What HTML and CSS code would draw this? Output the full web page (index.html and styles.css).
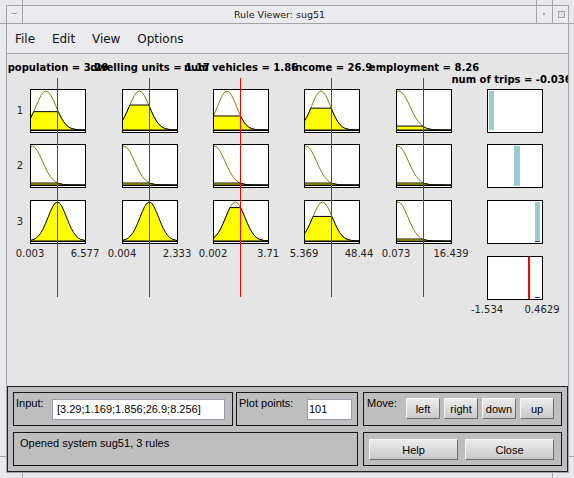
FILE: index.html
```html
<!DOCTYPE html>
<html>
<head>
<meta charset="utf-8">
<title>Rule Viewer: sug51</title>
<link rel="stylesheet" href="styles.css">
</head>
<body>
<svg class="defs" width="0" height="0">
  <defs>
    <path id="bell" vector-effect="non-scaling-stroke" d="M-4.5 0L-4 .0003L-3.5 .0022L-3 .0111L-2.5 .0439L-2.25 .0796L-2 .1353L-1.75 .2165L-1.5 .3247L-1.25 .4578L-1 .6065L-.75 .7548L-.5 .8825L-.25 .9692L0 1L.25 .9692L.5 .8825L.75 .7548L1 .6065L1.25 .4578L1.5 .3247L1.75 .2165L2 .1353L2.25 .0796L2.5 .0439L3 .0111L3.5 .0022L4 .0003L4.5 0"/>
    <path id="bellf" vector-effect="non-scaling-stroke" d="M-6 0L-4 .0003L-3.5 .0022L-3 .0111L-2.5 .0439L-2.25 .0796L-2 .1353L-1.75 .2165L-1.5 .3247L-1.25 .4578L-1 .6065L-.75 .7548L-.5 .8825L-.25 .9692L0 1L.25 .9692L.5 .8825L.75 .7548L1 .6065L1.25 .4578L1.5 .3247L1.75 .2165L2 .1353L2.25 .0796L2.5 .0439L3 .0111L3.5 .0022L4 .0003L6 0Z"/>
    <clipPath id="L47"><rect x="-10" y="-1" width="20" height="1.47"/></clipPath>
    <clipPath id="L64"><rect x="-10" y="-1" width="20" height="1.64"/></clipPath>
    <clipPath id="L36"><rect x="-10" y="-1" width="20" height="1.36"/></clipPath>
    <clipPath id="L56"><rect x="-10" y="-1" width="20" height="1.56"/></clipPath>
    <clipPath id="L10"><rect x="-10" y="-1" width="20" height="1.1"/></clipPath>
    <clipPath id="L05"><rect x="-10" y="-1" width="20" height="1.05"/></clipPath>
    <clipPath id="L86"><rect x="-10" y="-1" width="20" height="1.856"/></clipPath>
    <clipPath id="L63"><rect x="-10" y="-1" width="20" height="1.63"/></clipPath>
  </defs>
</svg>

<div class="frame">
  <div class="titlebar">
    <div class="tb-btn tb-min"><span class="dash"></span></div>
    <div class="tb-title">Rule Viewer: sug51</div>
    <div class="tb-btn tb-dot"><span class="dot"></span></div>
    <div class="tb-btn tb-max"><span class="sq"></span></div>
  </div>

  <div class="menubar">
    <span>File</span><span>Edit</span><span>View</span><span>Options</span>
  </div>

  <div class="plots">
    <div class="rowlabels"><span>1</span><span>2</span><span>3</span></div>

    <!-- population -->
    <div class="col">
      <div class="vname"><span>population = 3.29</span></div>
      <div class="mf"><svg width="54" height="42"><g transform="translate(15 40) scale(10 -39)"><use href="#bell" class="crv"/><use href="#bellf" class="fil" clip-path="url(#L47)"/><line class="lvl" vector-effect="non-scaling-stroke" x1="-1.229" x2="1.229" y1="0.47" y2="0.47"/></g><line class="base" x1="0" x2="54" y1="40.5" y2="40.5"/></svg></div>
      <div class="mf r2"><svg width="54" height="42"><g transform="translate(1 40) scale(10.5 -39)"><use href="#bell" class="crv"/><use href="#bellf" class="fil" clip-path="url(#L05)"/><line class="lvl" vector-effect="non-scaling-stroke" x1="-2.448" x2="2.448" y1="0.05" y2="0.05"/></g><line class="base" x1="0" x2="54" y1="40.5" y2="40.5"/></svg></div>
      <div class="mf r3"><svg width="54" height="42"><g transform="translate(26.3 40) scale(9.3 -39)"><use href="#bellf" class="fil"/></g><line class="base" x1="0" x2="54" y1="40.5" y2="40.5"/></svg></div>
      <div class="range"><span>0.003</span><span>6.577</span></div>
      <div class="cursor"></div>
    </div>

    <!-- dwelling units -->
    <div class="col">
      <div class="vname"><span>dwelling units = 1.17</span></div>
      <div class="mf"><svg width="54" height="42"><g transform="translate(16.3 40) scale(10 -39)"><use href="#bell" class="crv"/><use href="#bellf" class="fil" clip-path="url(#L64)"/><line class="lvl" vector-effect="non-scaling-stroke" x1="-0.945" x2="0.945" y1="0.64" y2="0.64"/></g><line class="base" x1="0" x2="54" y1="40.5" y2="40.5"/></svg></div>
      <div class="mf r2"><svg width="54" height="42"><g transform="translate(1 40) scale(10.5 -39)"><use href="#bell" class="crv"/><use href="#bellf" class="fil" clip-path="url(#L05)"/><line class="lvl" vector-effect="non-scaling-stroke" x1="-2.448" x2="2.448" y1="0.05" y2="0.05"/></g><line class="base" x1="0" x2="54" y1="40.5" y2="40.5"/></svg></div>
      <div class="mf r3"><svg width="54" height="42"><g transform="translate(26.3 40) scale(9.3 -39)"><use href="#bellf" class="fil"/></g><line class="base" x1="0" x2="54" y1="40.5" y2="40.5"/></svg></div>
      <div class="range"><span>0.004</span><span>2.333</span></div>
      <div class="cursor"></div>
    </div>

    <!-- num vehicles -->
    <div class="col">
      <div class="vname"><span>num vehicles = 1.86</span></div>
      <div class="mf"><svg width="54" height="42"><g transform="translate(13 40) scale(9.5 -39)"><use href="#bell" class="crv"/><use href="#bellf" class="fil" clip-path="url(#L36)"/><line class="lvl" vector-effect="non-scaling-stroke" x1="-1.43" x2="1.43" y1="0.36" y2="0.36"/></g><line class="base" x1="0" x2="54" y1="40.5" y2="40.5"/></svg></div>
      <div class="mf r2"><svg width="54" height="42"><g transform="translate(0.5 40) scale(10.5 -39)"><use href="#bell" class="crv"/><use href="#bellf" class="fil" clip-path="url(#L05)"/><line class="lvl" vector-effect="non-scaling-stroke" x1="-2.448" x2="2.448" y1="0.05" y2="0.05"/></g><line class="base" x1="0" x2="54" y1="40.5" y2="40.5"/></svg></div>
      <div class="mf r3"><svg width="54" height="42"><g transform="translate(21.3 40) scale(9.6 -39)"><use href="#bell" class="crv"/><use href="#bellf" class="fil" clip-path="url(#L86)"/><line class="lvl" vector-effect="non-scaling-stroke" x1="-0.558" x2="0.558" y1="0.856" y2="0.856"/></g><line class="base" x1="0" x2="54" y1="40.5" y2="40.5"/></svg></div>
      <div class="range"><span>0.002</span><span>3.71</span></div>
      <div class="cursor"></div>
    </div>

    <!-- income -->
    <div class="col">
      <div class="vname"><span>income = 26.9</span></div>
      <div class="mf"><svg width="54" height="42"><g transform="translate(16 40) scale(9.5 -39)"><use href="#bell" class="crv"/><use href="#bellf" class="fil" clip-path="url(#L56)"/><line class="lvl" vector-effect="non-scaling-stroke" x1="-1.077" x2="1.077" y1="0.56" y2="0.56"/></g><line class="base" x1="0" x2="54" y1="40.5" y2="40.5"/></svg></div>
      <div class="mf r2"><svg width="54" height="42"><g transform="translate(1 40) scale(10.5 -39)"><use href="#bell" class="crv"/><use href="#bellf" class="fil" clip-path="url(#L05)"/><line class="lvl" vector-effect="non-scaling-stroke" x1="-2.448" x2="2.448" y1="0.05" y2="0.05"/></g><line class="base" x1="0" x2="54" y1="40.5" y2="40.5"/></svg></div>
      <div class="mf r3"><svg width="54" height="42"><g transform="translate(17.5 40) scale(9.8 -39)"><use href="#bell" class="crv"/><use href="#bellf" class="fil" clip-path="url(#L63)"/><line class="lvl" vector-effect="non-scaling-stroke" x1="-0.961" x2="0.961" y1="0.63" y2="0.63"/></g><line class="base" x1="0" x2="54" y1="40.5" y2="40.5"/></svg></div>
      <div class="range"><span>5.369</span><span>48.44</span></div>
      <div class="cursor"></div>
    </div>

    <!-- employment -->
    <div class="col">
      <div class="vname"><span>employment = 8.26</span></div>
      <div class="mf"><svg width="54" height="42"><g transform="translate(2 40) scale(11 -39)"><use href="#bell" class="crv"/><use href="#bellf" class="fil" clip-path="url(#L10)"/><line class="lvl" vector-effect="non-scaling-stroke" x1="-2.146" x2="2.146" y1="0.1" y2="0.1"/></g><line class="base" x1="0" x2="54" y1="40.5" y2="40.5"/></svg></div>
      <div class="mf r2"><svg width="54" height="42"><g transform="translate(1 40) scale(10.5 -39)"><use href="#bell" class="crv"/><use href="#bellf" class="fil" clip-path="url(#L05)"/><line class="lvl" vector-effect="non-scaling-stroke" x1="-2.448" x2="2.448" y1="0.05" y2="0.05"/></g><line class="base" x1="0" x2="54" y1="40.5" y2="40.5"/></svg></div>
      <div class="mf r3"><svg width="54" height="42"><g transform="translate(1 40) scale(10 -39)"><use href="#bell" class="crv"/><use href="#bellf" class="fil" clip-path="url(#L05)"/><line class="lvl" vector-effect="non-scaling-stroke" x1="-2.448" x2="2.448" y1="0.05" y2="0.05"/></g><line class="base" x1="0" x2="54" y1="40.5" y2="40.5"/></svg></div>
      <div class="range"><span>0.073</span><span>16.439</span></div>
      <div class="cursor"></div>
    </div>

    <!-- output -->
    <div class="col">
      <div class="vname out"><span>num of trips = -0.0363</span></div>
      <div class="mf"><svg width="54" height="42"><rect class="bar" x="1" y="1" width="5" height="39"/></svg></div>
      <div class="mf r2"><svg width="54" height="42"><rect class="bar" x="26" y="1" width="6" height="40"/></svg></div>
      <div class="mf r3"><svg width="54" height="42"><rect class="bar" x="47" y="1" width="5" height="39"/><line class="tick" x1="47" x2="52" y1="40.5" y2="40.5"/></svg></div>
      <div class="mf r4"><svg width="54" height="42"><rect class="agg" x="40" y="0" width="2" height="42"/><line class="tick" x1="47" x2="52" y1="40.5" y2="40.5"/></svg></div>
      <div class="range"><span>-1.534</span><span>0.4629</span></div>
    </div>
  </div>

  <div class="panel">
    <div class="prow">
      <div class="grp g-input">
        <span class="lbl">Input:</span>
        <div class="field f-input">[3.29;1.169;1.856;26.9;8.256]</div>
      </div>
      <div class="grp g-pts">
        <span class="lbl">Plot points:</span>
        <div class="field f-pts">101</div>
      </div>
      <div class="grp g-move">
        <span class="lbl">Move:</span>
        <div class="btns">
          <button class="btn sm">left</button>
          <button class="btn sm">right</button>
          <button class="btn sm">down</button>
          <button class="btn sm">up</button>
        </div>
      </div>
    </div>
    <div class="prow">
      <div class="grp g-status"><span class="lbl">Opened system sug51, 3 rules</span></div>
      <div class="grp g-hc">
        <button class="btn big">Help</button>
        <button class="btn big">Close</button>
      </div>
    </div>
  </div>
</div>
</body>
</html>
```

FILE: styles.css
```css
html, body {
  margin: 0;
  padding: 0;
}

body {
  width: 574px;
  height: 478px;
  overflow: hidden;
  background: #e9e8ec;
  font-family: "DejaVu Sans", "Liberation Sans", sans-serif;
  color: #111;
}

.defs {
  display: block;
  width: 0;
  height: 0;
  overflow: hidden;
}

/* window frame */
.frame {
  position: relative;
  margin: 5px 0 0 6px;
  width: 561px;
  border: 1px solid #a4a4a8;
}

/* resize-handle ticks of the window manager frame */
.frame::before {
  content: "";
  position: absolute;
  left: 15px;
  top: -6px;
  width: 1px;
  height: 6px;
  background: #a4a4a8;
  box-shadow: 514px 0 #a4a4a8, 530px 0 #a4a4a8, 0 473px #a4a4a8, 530px 473px #a4a4a8;
}

.frame::after {
  content: "";
  position: absolute;
  left: -7px;
  top: 17px;
  width: 6px;
  height: 1px;
  background: #a4a4a8;
  box-shadow: 569px 0 #a4a4a8, 0 433px #a4a4a8, 569px 433px #a4a4a8;
}

.titlebar {
  display: flex;
  height: 17px;
  border-bottom: 1px solid #a4a4a8;
  background: #ebeaee;
}

.tb-btn {
  flex: none;
  width: 15px;
}

.tb-min {
  border-right: 1px solid #a4a4a8;
}

.tb-dot,
.tb-max {
  border-left: 1px solid #a4a4a8;
}

.dash {
  display: block;
  margin: 7px 0 0 4px;
  width: 6px;
  height: 1px;
  background: #9c9ca0;
  border-bottom: 1px solid #ffffff;
}

.dot {
  display: block;
  margin: 7px 0 0 6px;
  width: 2px;
  height: 2px;
  background: #a0a0a4;
}

.sq {
  display: block;
  margin: 5px 0 0 5px;
  width: 5px;
  height: 5px;
  border: 1px solid #a0a0a4;
  background: #e4e3e7;
  box-shadow: 1px 1px 0 #ffffff;
}

.tb-title {
  flex: 1;
  text-align: center;
  font-size: 9.5px;
  line-height: 17px;
  color: #1a1a1a;
}

/* menu */
.menubar {
  display: flex;
  align-items: center;
  gap: 16.8px;
  height: 29px;
  padding-left: 8px;
  border-bottom: 1px solid #a8a8ac;
  background: #ebeaee;
  font-size: 12px;
  color: #111;
}

/* plot area */
.plots {
  display: grid;
  grid-template-columns: 23px 92px 91px 91px 92px 91px 56px;
  align-items: start;
  height: 332px;
  overflow: hidden;
  background: #e5e5e5;
}

.rowlabels {
  display: flex;
  flex-direction: column;
  padding: 35px 0 0 3px;
  font-size: 10px;
  color: #222;
}

.rowlabels span {
  height: 44px;
  line-height: 44px;
  text-align: center;
}

.rowlabels span + span {
  margin-top: 11px;
}

.rowlabels span:last-child {
  margin-top: 12px;
}

.col {
  position: relative;
  width: 56px;
  display: flex;
  flex-direction: column;
}

.vname {
  box-sizing: border-box;
  height: 35px;
  padding-top: 8px;
  display: flex;
  justify-content: center;
  white-space: nowrap;
  font-size: 10px;
  font-weight: bold;
  line-height: 12px;
  color: #000;
}

.vname.out {
  padding-top: 20px;
}

.mf {
  box-sizing: border-box;
  width: 56px;
  height: 44px;
  border: 1px solid #000;
  background: #fff;
}

.mf svg {
  display: block;
}

.mf.r2 {
  margin-top: 11px;
}

.mf.r3,
.mf.r4 {
  margin-top: 12px;
}

.crv {
  fill: none;
  stroke: #808000;
  stroke-width: 1;
}

.fil {
  fill: #ffff00;
  stroke: #000;
  stroke-width: 1;
}

.lvl {
  stroke: #000;
  stroke-width: 1;
}

.base {
  stroke: #000;
  stroke-width: 1;
}

.bar {
  fill: #99cccc;
}

.agg {
  fill: #ff0000;
}

.tick {
  stroke: #2a2ad0;
  stroke-width: 1;
}

.range {
  display: flex;
  justify-content: space-between;
  margin: 4px 1px 0 0;
  font-size: 10px;
  line-height: 12px;
  color: #222;
}

.range span {
  width: 0;
  display: flex;
  justify-content: center;
  white-space: nowrap;
}

.cursor {
  position: absolute;
  left: 27px;
  top: 24px;
  width: 1px;
  height: 219px;
  background: #ff0000;
}

/* bottom panel */
.panel {
  box-sizing: border-box;
  height: 86px;
  border: 1px solid #202020;
  background: #bebebe;
  padding: 5px;
  display: flex;
  flex-direction: column;
  gap: 6px;
  font-family: "Liberation Sans", Arial, sans-serif;
  font-size: 11px;
  color: #000;
}

.prow {
  display: flex;
  height: 34px;
}

.grp {
  box-sizing: border-box;
  height: 34px;
  border: 1px solid #161616;
  display: flex;
  align-items: flex-start;
}

.lbl {
  padding-top: 4px;
  line-height: 13px;
  white-space: nowrap;
}

.g-input {
  width: 220px;
  margin-right: 3px;
  padding: 0 7px 0 2px;
}

.g-pts {
  width: 122px;
  margin-right: 5px;
  padding: 0 5px 0 2px;
}

.g-move {
  width: 199px;
  padding: 0 7px 0 3px;
}

.g-status {
  width: 345px;
  margin-right: 5px;
  padding-left: 6px;
}

.g-hc {
  width: 199px;
  padding-left: 5px;
  gap: 7px;
}

.field {
  box-sizing: border-box;
  margin-left: auto;
  margin-top: 6px;
  height: 21px;
  background: #fff;
  border: 1px solid #9a9aab;
  line-height: 19px;
  padding-left: 4px;
  white-space: nowrap;
  overflow: hidden;
}

.f-input {
  width: 173px;
}

.f-pts {
  width: 45px;
  padding-left: 1px;
}

.btns {
  display: flex;
  gap: 4px;
  margin-left: auto;
  margin-top: 5px;
}

.btn {
  box-sizing: border-box;
  height: 21px;
  padding: 0;
  margin: 0;
  font-family: "Liberation Sans", Arial, sans-serif;
  font-size: 11px;
  color: #000;
  border: 1px solid;
  border-color: #f6f6f6 #6c6c6c #6c6c6c #f6f6f6;
  background: linear-gradient(#ececec, #c9c9c9);
}

.btn.sm {
  width: 34px;
}

.btn.big {
  width: 89px;
  margin-top: 6px;
}
```
